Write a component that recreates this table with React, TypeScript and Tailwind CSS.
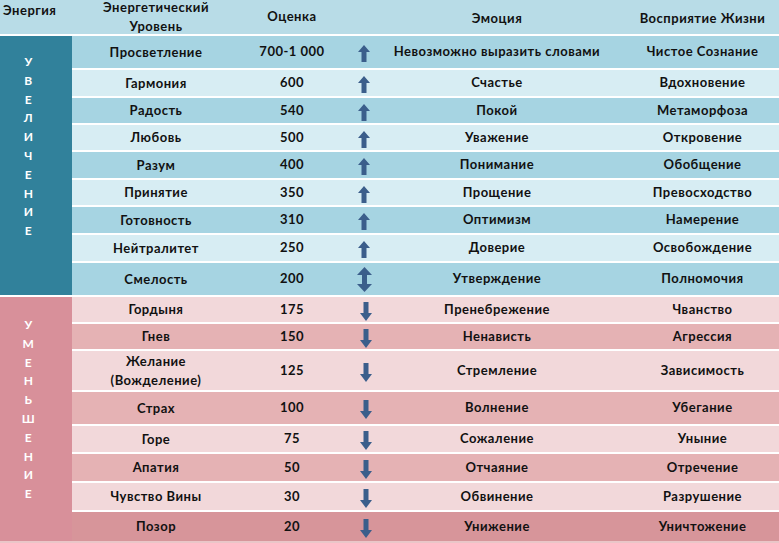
const font = { fontFamily: "Lato, 'Liberation Sans', sans-serif" };

type Dir = "up" | "down" | "both";
type Row = { level: string[]; score: string; dir: Dir; emotion: string; life: string; h: number; bg: string };

const BLUE_DARK = "bg-[#a6d4e2]";
const BLUE_LIGHT = "bg-[#d7edf3]";
const PINK_LIGHT = "bg-[#f2d8da]";
const PINK_DARK = "bg-[#e5b2b4]";
const PINK_LAST = "bg-[#d7959a]";

const rows: Row[] = [
  { level: ["Просветление"], score: "700-1 000", dir: "up", emotion: "Невозможно выразить словами", life: "Чистое Сознание", h: 32, bg: BLUE_DARK },
  { level: ["Гармония"], score: "600", dir: "up", emotion: "Счастье", life: "Вдохновение", h: 26, bg: BLUE_LIGHT },
  { level: ["Радость"], score: "540", dir: "up", emotion: "Покой", life: "Метаморфоза", h: 25, bg: BLUE_DARK },
  { level: ["Любовь"], score: "500", dir: "up", emotion: "Уважение", life: "Откровение", h: 25, bg: BLUE_LIGHT },
  { level: ["Разум"], score: "400", dir: "up", emotion: "Понимание", life: "Обобщение", h: 26, bg: BLUE_DARK },
  { level: ["Принятие"], score: "350", dir: "up", emotion: "Прощение", life: "Превосходство", h: 25, bg: BLUE_LIGHT },
  { level: ["Готовность"], score: "310", dir: "up", emotion: "Оптимизм", life: "Намерение", h: 26, bg: BLUE_DARK },
  { level: ["Нейтралитет"], score: "250", dir: "up", emotion: "Доверие", life: "Освобождение", h: 26, bg: BLUE_LIGHT },
  { level: ["Смелость"], score: "200", dir: "both", emotion: "Утверждение", life: "Полномочия", h: 32, bg: BLUE_DARK },
  { level: ["Гордыня"], score: "175", dir: "down", emotion: "Пренебрежение", life: "Чванство", h: 25, bg: PINK_LIGHT },
  { level: ["Гнев"], score: "150", dir: "down", emotion: "Ненависть", life: "Агрессия", h: 25, bg: PINK_DARK },
  { level: ["Желание", "(Вожделение)"], score: "125", dir: "down", emotion: "Стремление", life: "Зависимость", h: 39, bg: PINK_LIGHT },
  { level: ["Страх"], score: "100", dir: "down", emotion: "Волнение", life: "Убегание", h: 32, bg: PINK_DARK },
  { level: ["Горе"], score: "75", dir: "down", emotion: "Сожаление", life: "Уныние", h: 26, bg: PINK_LIGHT },
  { level: ["Апатия"], score: "50", dir: "down", emotion: "Отчаяние", life: "Отречение", h: 27, bg: PINK_DARK },
  { level: ["Чувство Вины"], score: "30", dir: "down", emotion: "Обвинение", life: "Разрушение", h: 27, bg: PINK_LIGHT },
  { level: ["Позор"], score: "20", dir: "down", emotion: "Унижение", life: "Уничтожение", h: 29, bg: PINK_LAST },
];

function Arrow({ dir }: { dir: Dir }) {
  if (dir === "up")
    return (
      <svg width="12" height="17" viewBox="0 0 12 17" className="mt-[3px]">
        <path d="M6 0 L12 7 L8.5 7 L8.5 17 L3.5 17 L3.5 7 L0 7 Z" fill="#3b5e8b" />
      </svg>
    );
  if (dir === "down")
    return (
      <svg width="12" height="19" viewBox="0 0 12 19" className="ml-[4px] mt-[3px]">
        <path d="M3.5 0 H8.5 V11 H12 L6 19 L0 11 H3.5 Z" fill="#3b5e8b" />
      </svg>
    );
  return (
    <svg width="15" height="25" viewBox="0 0 15 25" className="ml-[1px] mt-[1px]">
      <path d="M7.5 0 L15 8 L10 8 L10 17 L15 17 L7.5 25 L0 17 L5 17 L5 8 L0 8 Z" fill="#3b5e8b" />
    </svg>
  );
}

function Vertical({ word }: { word: string }) {
  return (
    <div className="flex flex-col pr-[15px] text-center text-[12px] font-bold leading-[18.8px] text-white">
      {word.split("").map((ch, i) => (
        <span key={i}>{ch}</span>
      ))}
    </div>
  );
}

export default function App() {
  const rowHeights = [34, ...rows.map((r) => r.h)].map((h) => `${h}px`).join(" ");
  return (
    <div className="w-[779px] h-[543px] bg-white overflow-hidden text-[#111]" style={font}>
      <div
        className="grid grid-cols-[72px_168px_104px_40px_242px_153px] gap-y-[2px] bg-white text-[13px] font-bold tracking-[0.5px]"
        style={{ gridTemplateRows: rowHeights }}
      >
        {/* header */}
        <div className="bg-[#b8dce7] pl-[3px] pt-[1px] leading-[18px]">Энергия</div>
        <div className="bg-[#b8dce7] flex flex-col items-center justify-center leading-[19px] -mt-[1px]">
          <span>Энергетический</span>
          <span>Уровень</span>
        </div>
        <div className="bg-[#b8dce7] flex items-center justify-center">Оценка</div>
        <div className="bg-[#b8dce7]" />
        <div className="bg-[#b8dce7] flex items-center justify-center pr-[16px] pt-[3px]">Эмоция</div>
        <div className="bg-[#b8dce7] flex items-center justify-center pt-[3px]">Восприятие Жизни</div>

        {/* increase */}
        <div className="bg-[#31819b] row-span-9 pt-[17px]">
          <Vertical word="УВЕЛИЧЕНИЕ" />
        </div>
        {rows.slice(0, 9).map((r) => (
          <RowCells key={r.level.join()} r={r} />
        ))}

        {/* decrease */}
        <div className="bg-[#d8909a] row-span-8 pt-[19px]">
          <Vertical word="УМЕНЬШЕНИЕ" />
        </div>
        {rows.slice(9).map((r) => (
          <RowCells key={r.level.join()} r={r} />
        ))}
      </div>
      <div className="h-[2px] bg-[#eac6c8]" />
    </div>
  );
}

function RowCells({ r }: { r: Row }) {
  return (
    <>
      <div className={`${r.bg} flex flex-col items-center justify-center leading-[19px]`}>
        {r.level.map((l) => (
          <span key={l}>{l}</span>
        ))}
      </div>
      <div className={`${r.bg} flex items-center justify-center`}>{r.score}</div>
      <div className={`${r.bg} flex items-center justify-center`}>
        <Arrow dir={r.dir} />
      </div>
      <div className={`${r.bg} flex items-center justify-center pr-[16px]`}>{r.emotion}</div>
      <div className={`${r.bg} flex items-center justify-center`}>{r.life}</div>
    </>
  );
}
